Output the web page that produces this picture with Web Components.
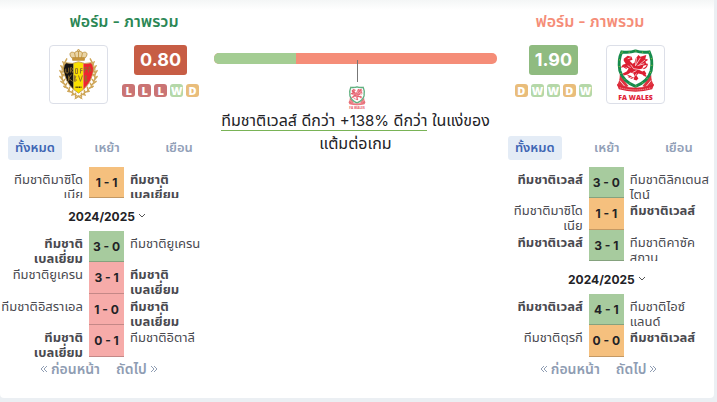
<!DOCTYPE html>
<html lang="th">
<head>
<meta charset="utf-8">
<meta name="viewport" content="width=device-width, initial-scale=1">
<title>ฟอร์ม - ภาพรวม</title>
<style>
    body {
        margin: 0;
        background: #ebeff3;
        color: #222226;
        font-family: Inter, "Noto Sans", "Noto Sans Thai", sans-serif;
    }
</style>
</head>
<body>
<form-comparison></form-comparison>

<script>
const belgium = 'ทีมชาติ เบลเยี่ยม'
const wales = 'ทีมชาติเวลส์'

const teams = {
    belgium: {
        rating: '0.80',
        level: 'low',
        form: 'LLLWD',
        groups: [
            [ { home: 'ทีมชาติมาซิโด เนีย', away: belgium, score: '1 - 1', result: 'D', own: 'away' } ],
            [
                { home: belgium, away: 'ทีมชาติยูเครน', score: '3 - 0', result: 'W', own: 'home' },
                { home: 'ทีมชาติยูเครน', away: belgium, score: '3 - 1', result: 'L', own: 'away' },
                { home: 'ทีมชาติอิสราเอล', away: belgium, score: '1 - 0', result: 'L', own: 'away' },
                { home: belgium, away: 'ทีมชาติอิตาลี', score: '0 - 1', result: 'L', own: 'home' }
            ]
        ]
    },
    wales: {
        rating: '1.90',
        level: 'high',
        form: 'DWWDW',
        groups: [
            [
                { home: wales, away: 'ทีมชาติลิกเตนส ไตน์', score: '3 - 0', result: 'W', own: 'home' },
                { home: 'ทีมชาติมาซิโด เนีย', away: wales, score: '1 - 1', result: 'D', own: 'away' },
                { home: wales, away: 'ทีมชาติคาซัค สถาน', score: '3 - 1', result: 'W', own: 'home' }
            ],
            [
                { home: wales, away: 'ทีมชาติไอซ์ แลนด์', score: '4 - 1', result: 'W', own: 'home' },
                { home: 'ทีมชาติตุรกี', away: wales, score: '0 - 0', result: 'D', own: 'away' }
            ]
        ]
    }
}

class BaseElement extends HTMLElement {
    constructor() {
        super()
        this.attachShadow( { mode: 'open' } )
    }

    connectedCallback () {
        const template = document.createElement( 'template' )
        template.innerHTML = `<style>* { box-sizing: border-box }${this.getStyle()}</style>${this.getTemplate()}`
        this.shadowRoot.replaceChildren( template.content.cloneNode( true ) )
    }
}

class TeamCrest extends BaseElement {
    getStyle () {
        return `
            :host { display: block }
            svg { display: block; width: 100%; height: 100% }
            text { font-family: "Open Sans", sans-serif; font-weight: 800 }
        `
    }

    /* one half of the wreath, the other is mirrored */
    getBelgium () {
        return `
        <svg viewBox="0 0 40 52" role="img" aria-label="เบลเยี่ยม">
            <defs>
                <g id="half" fill="none" stroke="#cfa75a">
                    <path d="M7 12 C1 20 2 31 7 38 C11 44 16 46 24 51" stroke-width="1"/>
                    <path d="M8 10l-2 4M4 13l2 4M8 15l-3 4M2 17l3 5M6 20l-3 4M1 22l3 5M5 26l-2 3M1 28l3 4M6 31l-2 3M2 33l4 3M8 35l-2 4M5 38l4 2M11 39l-1 4M9 43l4 1M14 42v4M13 47l4-1M17 45v4M17 50l3-2" stroke-width="1.500" stroke-linecap="round"/>
                </g>
            </defs>
            <use href="#half"/>
            <use href="#half" transform="matrix(-1 0 0 1 40 0)"/>
            <g fill="#ead5a6" stroke="#b98b35" stroke-width=".8">
                <path d="M13 9 C9 4 13 2 16 4 C17 1.500 23 1.500 24 4 C27 2 31 4 27 9 Z"/>
                <path d="M20 2v7M16 4l1 5M24 4l-1 5" fill="none"/>
                <path d="M14 9h12v2.500H14z" fill="#c9973f"/>
                <circle cx="20" cy="1.500" r="1"/>
            </g>
            <clipPath id="shield"><path d="M7 14 Q14 16 20 13 Q26 16 33 14 Q37 19 34 27 Q31 38 20 45 Q9 38 6 27 Q3 19 7 14Z"/></clipPath>
            <g clip-path="url(#shield)">
                <path fill="#151313" d="M3 12h12v34H3z"/>
                <path fill="#f9e000" d="M15 12h10v34H15z"/>
                <path fill="#ed2430" d="M25 12h12v34H25z"/>
            </g>
            <path d="M7 14 Q14 16 20 13 Q26 16 33 14 Q37 19 34 27 Q31 38 20 45 Q9 38 6 27 Q3 19 7 14Z" fill="none" stroke="#c8a050" stroke-width="1"/>
            <g fill="none" stroke="#92702c" stroke-width="1">
                <path d="M7 20v4q2 2 3-1v-4M12 24v-5q3 0 1 3l2 3M17 20v5h2v-5zM22 25v-5h2M22 22h2M26 24v-5h3M26 21h3M30 24l1-6 2 5"/>
                <path d="M10 27v6M13 26l-3 4 4 3M16 27v6q4-1 0-3 3-2 0-3M20 27l2 6 2-6M27 27v6q4-1 0-3 3-2 0-3"/>
            </g>
            <path d="M17 39h6" stroke="#443616" stroke-width="1.300" stroke-dasharray="1.200 .5"/>
        </svg>`
    }

    getWales () {
        return `
        <svg viewBox="0 0 40 52" role="img" aria-label="เวลส์">
            <path d="M4 26 Q4 33 1 37l6 3 6-2zM36 26 Q36 33 39 37l-6 3-6-2z" fill="#df3440"/>
            <path d="M4 32l5 6M36 32l-5 6" stroke="#fff" stroke-width=".8"/>
            <path d="M6 3 Q14 4 20 2 Q26 4 34 3 Q38 11 36 22 Q33 33 20 38 Q7 33 4 22 Q2 11 6 3Z" fill="#fff" stroke="#168b4c" stroke-width="3"/>
            <path d="M6 3 Q14 4 20 2 Q26 4 34 3 Q38 11 36 22 Q33 33 20 38 Q7 33 4 22 Q2 11 6 3Z" fill="none" stroke="#b9cf3c" stroke-width="1" stroke-dasharray="1 6"/>
            <g fill="#dc1f32">
                <path d="M8 10l4-3 4 1 1 3-3 1 3 3 2-1 1-4 3-4 2 2 6-2-1 4 3 1-3 2 2 3-4 1-1 3-4 1 4 2 2-1 2 3-2 3-2-2-4-1-2 2 2 3-2 2-3-1 1-3-1-3-3-1-3 2-4 1-1-2 4-2 2-3-4-2-4 1 2-3 3-1-2-3z"/>
            </g>
            <path d="M28 20q4-1 4-5M29 26l2 2M12 27l3 1-2 1M8 18l3 2M15 30l3-1" fill="none" stroke="#dc1f32" stroke-width="1.200"/>
            <path d="M21 9l-1 8 5-8M24 16l6-5M22 17l7-2M15 16l3 4 6 1M17 24l4-2M12 10l3-1M19 28l2-3M12 17l3 2" stroke="#fff" stroke-width=".7" fill="none"/>
            <path d="M1 36 Q20 43 39 36 L37 41 Q20 46 3 41Z" fill="#dc2637"/>
            <path d="M4 39.500 Q20 44 36 39.500" fill="none" stroke="#f7a6a5" stroke-width="1" stroke-dasharray="1.200 .8"/>
            <text x="20" y="51.500" text-anchor="middle" font-size="7" fill="#df2238">FA WALES</text>
        </svg>`
    }

    getTemplate () {
        return this.getAttribute( 'team' ) == 'wales' ? this.getWales() : this.getBelgium()
    }
}

class TeamHead extends BaseElement {
    getStyle () {
        return `
            :host { display: block; text-align: center }
            h2 { margin: 0; font-size: 16px; line-height: 20px; font-weight: 600; color: var(--title) }
            .body { display: flex; justify-content: center; align-items: flex-start; gap: 14px; margin-top: 14px }
            :host([mirrored]) .body { flex-direction: row-reverse }
            .crest { width: 59px; height: 59px; padding: 3px 8px; border: 1px solid #dcdfe8; border-radius: 4px; background: #fff }
            team-crest { height: 51px }
            .side { display: flex; flex-direction: column; align-items: center; gap: 9px }
            .rating { padding: 0 6px; border-radius: 3px; color: #fff; font-size: 18px; line-height: 30px; font-weight: 700 }
            .low { background: #c75d45 }
            .high { background: #8fbb80 }
            .form { display: flex; gap: 3px }
            .form span { width: 13px; border-radius: 3px; color: #fff; font-family: "Open Sans", sans-serif; font-size: 11px; line-height: 13px; font-weight: 800 }
            .L { background: #ca7474 }
            .W { background: #b5d8a8 }
            .D { background: #e9bd7b }
        `
    }

    getTemplate () {
        const name = this.getAttribute( 'team' )
        const team = teams[ name ]
        return `
            <h2>ฟอร์ม - ภาพรวม</h2>
            <div class="body">
                <div class="crest"><team-crest team="${name}"></team-crest></div>
                <div class="side">
                    <div class="rating ${team.level}">${team.rating}</div>
                    <div class="form">${[ ...team.form ].map( r => `<span class="${r}">${r}</span>` ).join( '' )}</div>
                </div>
            </div>
        `
    }
}

class FormTabs extends BaseElement {
    getStyle () {
        return `
            :host { display: block; padding: 0 8px }
            div { display: flex; gap: 18px }
            button { flex: none; width: 54px; height: 24px; padding: 0; border: 0; border-radius: 3px; background: none; color: #92a0b8; font-family: inherit; font-size: 13px; font-weight: 600; cursor: pointer }
            button[aria-selected="true"] { background: #e4ecf6; color: #3e66b4 }
        `
    }

    getTemplate () {
        return `
            <div role="tablist">
                <button role="tab" aria-selected="true">ทั้งหมด</button>
                <button role="tab" aria-selected="false">เหย้า</button>
                <button role="tab" aria-selected="false">เยือน</button>
            </div>
        `
    }

    connectedCallback () {
        super.connectedCallback()
        const tabs = this.shadowRoot.querySelectorAll( 'button' )
        tabs.forEach( tab => tab.addEventListener( 'click', () => {
            tabs.forEach( t => t.setAttribute( 'aria-selected', t == tab ) )
        } ) )
    }
}

class MatchList extends BaseElement {
    getStyle () {
        return `
            :host { display: block }
            .group:first-of-type { overflow: hidden }
            .match { display: grid; grid-template-columns: 89px 35px 1fr; grid-template-rows: 100%; height: 31px }
            .match:nth-child(even) { height: 32px }
            .name { padding: 5px 6px 0; font-size: 13px; line-height: 15px; color: #4a4a50; white-space: nowrap }
            .name span { display: block }
            .home { display: flex; flex-direction: column; align-items: flex-end }
            .own { font-weight: 700 }
            .score { border-bottom: 1px solid rgba(0, 0, 0, .2); font-size: 12px; line-height: 32px; font-weight: 700; text-align: center }
            .W { background: #a7cb9e }
            .D { background: #f5c07e }
            .L { background: #f6aba9 }
            .season { display: flex; align-items: center; justify-content: center; gap: 3px; width: 100%; height: 33px; padding: 3px 0 0; border: 0; background: none; color: #222226; font-family: inherit; font-size: 12px; font-weight: 700; cursor: pointer }
        `
    }

    getName ( match, side ) {
        const own = match.own == side ? 'own' : ''
        return `<div class="name ${side} ${own}">${match[ side ].split( ' ' ).map( t => `<span>${t}</span>` ).join( '' )}</div>`
    }

    getGroup ( group ) {
        const rows = group.map( m => `
            <div class="match">
                ${this.getName( m, 'home' )}
                <div class="score ${m.result}">${m.score}</div>
                ${this.getName( m, 'away' )}
            </div>` )
        return `<div class="group">${rows.join( '' )}</div>`
    }

    getTemplate () {
        const [ current, previous ] = teams[ this.getAttribute( 'team' ) ].groups
        return `
            ${this.getGroup( current )}
            <button class="season">2024/2025
                <svg width="8" height="6" viewBox="0 0 8 6" fill="none" stroke="#555" aria-hidden="true"><path d="M1 1l3 3 3-3"/></svg>
            </button>
            ${this.getGroup( previous )}
        `
    }
}

class PageLinks extends BaseElement {
    getStyle () {
        return `
            :host { display: flex; gap: 16px; padding-left: 40px }
            button { display: flex; align-items: center; gap: 3px; height: 24px; padding: 0; border: 0; background: none; color: #8f9db3; font-family: inherit; font-size: 14px; font-weight: 600; white-space: nowrap; cursor: pointer }
        `
    }

    getTemplate () {
        const icon = d => `<svg width="8" height="8" viewBox="0 0 8 8" fill="none" stroke="currentColor" aria-hidden="true"><path d="${d}"/></svg>`
        return `
            <button>${icon( 'M4 1L1 4l3 3M7 1L4 4l3 3' )}ก่อนหน้า</button>
            <button>ถัดไป${icon( 'M1 1l3 3-3 3M4 1l3 3-3 3' )}</button>
        `
    }
}

class FormBalance extends BaseElement {
    getStyle () {
        return `
            :host { display: flex; flex-direction: column; align-items: center; padding-right: 3px }
            .bar { display: flex; width: 100%; height: 11px; border-radius: 5px; overflow: hidden; background: #f58d78 }
            .bar i { width: 29%; background: #a4cd93 }
            .pin { position: relative; width: 1px; height: 18px; margin-left: 4px }
            .pin::before { content: ""; position: absolute; top: -4px; bottom: 0; width: 1px; background: #777 }
            team-crest { width: 18px; height: 23px; margin: 4px 0 0 3px; opacity: .7 }
            p { margin: 0; font-size: 16px; line-height: 22px; text-align: center; white-space: nowrap }
        `
    }

    getTemplate () {
        return `
            <div class="bar"><i></i></div>
            <div class="pin"></div>
            <team-crest team="wales"></team-crest>
            <p><slot></slot></p>
        `
    }
}

class FormComparison extends BaseElement {
    getStyle () {
        return `
            :host { display: block; padding: 0 3px 4px 0 }
            main { display: grid; grid-template-columns: 3fr 4fr 3fr; padding-bottom: 17px; border-radius: 0 0 4px 4px; background: linear-gradient(#f4f6f6, #fff 10px) #fff }
            section { padding-top: 11px; min-width: 0 }
            .left { --title: #2b8755 }
            .right { --title: #f58d78 }
            .left team-head { padding-left: 34px }
            .right team-head { padding-right: 34px }
            form-tabs { margin-top: 32px }
            match-list { margin-top: 7px }
            form-balance { margin-top: 42px }
            u { text-decoration: none; border-bottom: 1px solid #79b356 }
            b { font-size: 15px; font-weight: 400 }
        `
    }

    getSide ( name, side ) {
        return `
            <section class="${side}">
                <team-head team="${name}" ${side == 'right' ? 'mirrored' : ''}></team-head>
                <form-tabs></form-tabs>
                <match-list team="${name}"></match-list>
                <page-links></page-links>
            </section>
        `
    }

    getTemplate () {
        return `
            <main>
                ${this.getSide( 'belgium', 'left' )}
                <section>
                    <form-balance><u>ทีมชาติเวลส์ ดีกว่า <b>+138%</b> ดีกว่า</u> ในแง่ของ<br>แต้มต่อเกม</form-balance>
                </section>
                ${this.getSide( 'wales', 'right' )}
            </main>
        `
    }
}

customElements.define( 'team-crest', TeamCrest )
customElements.define( 'team-head', TeamHead )
customElements.define( 'form-tabs', FormTabs )
customElements.define( 'match-list', MatchList )
customElements.define( 'page-links', PageLinks )
customElements.define( 'form-balance', FormBalance )
customElements.define( 'form-comparison', FormComparison )
</script>
</body>
</html>
